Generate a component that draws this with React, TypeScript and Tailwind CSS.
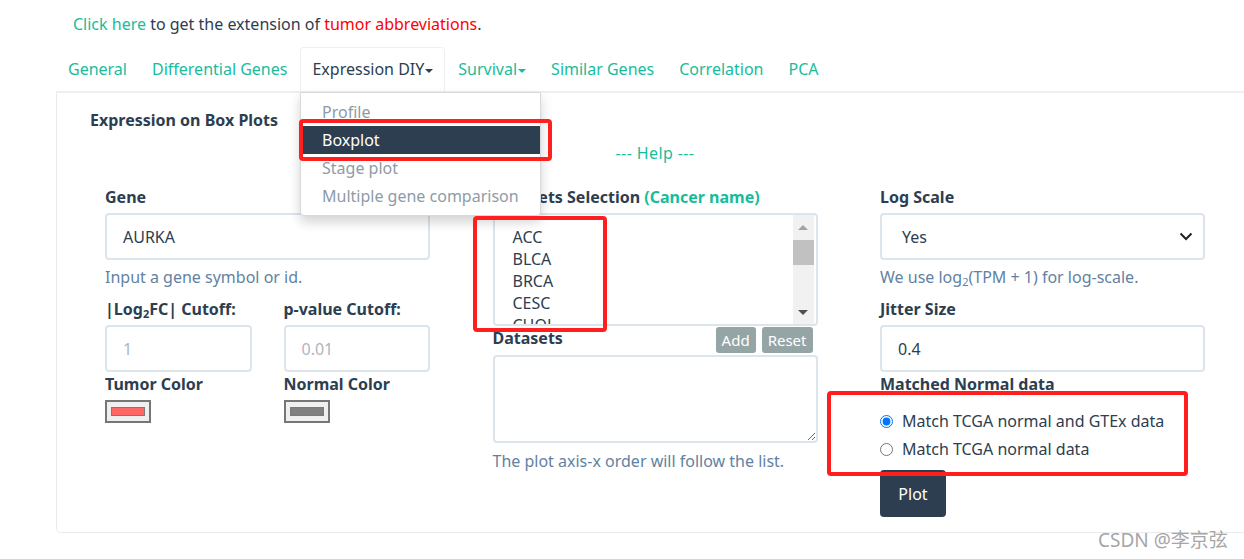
import React from "react";

const labelCls = "block text-[16px] font-bold leading-[24px] text-[#2c3e50]";
const helpCls = "leading-[24px] text-[#6282a2]";
const inputCls =
  "flex h-[47px] items-center rounded-[4px] border-2 border-[#dce4ec] bg-white pl-[16px]";

function Caret({ color }: { color: "dark" | "teal" }) {
  return (
    <span
      className={
        color === "dark"
          ? "ml-[1px] inline-block h-0 w-0 border-x-[4px] border-t-[4px] border-x-transparent border-t-[#2c3e50] align-middle"
          : "ml-[1px] inline-block h-0 w-0 border-x-[4px] border-t-[4px] border-x-transparent border-t-[#18bc9c] align-middle"
      }
    />
  );
}

function Swatch({ red }: { red: boolean }) {
  return (
    <div className="mt-[4px] flex h-[23px] w-[46px] items-center justify-center border-2 border-[#767676] bg-[#efefef]">
      <div
        className={
          red
            ? "h-[9px] w-[34px] border border-[#7a7a7a] bg-[#ff6666]"
            : "h-[9px] w-[34px] border border-[#7a7a7a] bg-[#808080]"
        }
      />
    </div>
  );
}

export default function App() {
  return (
    <div className="relative h-[559px] w-[1244px] overflow-hidden bg-white font-['Noto_Sans',sans-serif] text-[16px] text-[#2c3e50]">
      {/* top line */}
      <div className="h-[47px] pl-[73px] pt-[12px] leading-[24px]">
        <span className="text-[#18bc9c]">Click here</span> to get the extension of{" "}
        <span className="text-[#ff0000]">tumor abbreviations</span>.
      </div>

      {/* tabs */}
      <nav className="ml-[56px] flex h-[46px] border-b-2 border-[#ecf0f1]">
        <div className="mr-[1px] h-[44px] px-3 leading-[44px] text-[#18bc9c]">General</div>
        <div className="mr-[1px] h-[44px] px-3 leading-[44px] text-[#18bc9c]">Differential Genes</div>
        <div className="mr-[1px] h-[44px] rounded-t-[4px] border-x border-t border-[#ecf0f1] px-[11px] leading-[43px] text-[#2c3e50]">
          Expression DIY
          <Caret color="dark" />
        </div>
        <div className="mr-[1px] h-[44px] px-3 leading-[44px] text-[#18bc9c]">
          Survival
          <Caret color="teal" />
        </div>
        <div className="mr-[1px] h-[44px] px-3 leading-[44px] text-[#18bc9c]">Similar Genes</div>
        <div className="mr-[1px] h-[44px] px-3 leading-[44px] text-[#18bc9c]">Correlation</div>
        <div className="mr-[1px] h-[44px] px-3 leading-[44px] text-[#18bc9c]">PCA</div>
      </nav>

      {/* panel */}
      <div className="ml-[56px] h-[440px] w-[1250px] rounded-bl-[5px] border-x border-b border-[#e6ebeb] pl-[33px] pt-[15px]">
        <div className="text-[16px] font-bold leading-[24px]">Expression on Box Plots</div>

        <div className="ml-[15px] w-[1100px]">
          <div className="mt-[9px] text-center leading-[24px] tracking-[0.4px] text-[#18bc9c]">--- Help ---</div>

          <div className="mt-[20px] grid grid-cols-3 gap-x-[62.5px]">
            {/* column 1 */}
            <div className="flex flex-col">
              <span className={labelCls}>Gene</span>
              <div className={"mt-[4px] " + inputCls}>AURKA</div>
              <div className={"mt-[5px] " + helpCls}>Input a gene symbol or id.</div>
              <div className="mt-[8px] grid grid-cols-2 gap-x-[32px]">
                <div className="flex flex-col">
                  <span className={labelCls}>
                    |Log<sub className="text-[11px]">2</sub>FC| Cutoff:
                  </span>
                  <div className={"mt-[4px] text-[#acb6c0] " + inputCls}>1</div>
                  <span className={labelCls}>Tumor Color</span>
                  <Swatch red={true} />
                </div>
                <div className="flex flex-col">
                  <span className={labelCls}>p-value Cutoff:</span>
                  <div className={"mt-[4px] text-[#acb6c0] " + inputCls}>0.01</div>
                  <span className={labelCls}>Normal Color</span>
                  <Swatch red={false} />
                </div>
              </div>
            </div>

            {/* column 2 */}
            <div className="flex flex-col">
              <span className={labelCls}>
                Datasets Selection <span className="text-[#18bc9c]">(Cancer name)</span>
              </span>
              <div className="mt-[4px] flex h-[113px] overflow-hidden rounded-[4px] border-2 border-[#dce4ec] bg-white">
                <div className="flex-1 pl-[18px] pt-[11px] leading-[22px]">
                  <div>ACC</div>
                  <div>BLCA</div>
                  <div>BRCA</div>
                  <div>CESC</div>
                  <div>CHOL</div>
                </div>
                <div className="mr-[2px] flex w-[21px] flex-col items-center bg-[#f1f1f1]">
                  <div className="flex h-[25px] items-center justify-center">
                    <div className="h-0 w-0 border-x-[5px] border-b-[5px] border-x-transparent border-b-[#a3a3a3]" />
                  </div>
                  <div className="h-[25px] w-[21px] bg-[#c1c1c1]" />
                  <div className="flex-1" />
                  <div className="flex h-[24px] items-center justify-center">
                    <div className="h-0 w-0 border-x-[5px] border-t-[5px] border-x-transparent border-t-[#505050]" />
                  </div>
                </div>
              </div>
              <div className="flex h-[29px] items-start justify-between">
                <span className={labelCls}>Datasets</span>
                <div className="mr-[5px] mt-[1px] flex gap-[6px]">
                  <button className="h-[26px] rounded-[3px] bg-[#95a5a6] px-[6px] text-[15px] leading-[26px] text-white">
                    Add
                  </button>
                  <button className="h-[26px] rounded-[3px] bg-[#95a5a6] px-[6px] text-[15px] leading-[26px] text-white">
                    Reset
                  </button>
                </div>
              </div>
              <textarea
                readOnly
                className="block h-[88px] w-full rounded-[4px] border-2 border-[#dce4ec] bg-white outline-none"
              />
              <div className={"mt-[6px] " + helpCls}>The plot axis-x order will follow the list.</div>
            </div>

            {/* column 3 */}
            <div className="flex flex-col">
              <span className={labelCls}>Log Scale</span>
              <div className={"mt-[4px] justify-between pl-[20px] pr-[10px] " + inputCls}>
                <span>Yes</span>
                <svg width="14" height="9" viewBox="0 0 14 9" fill="none">
                  <path d="M1.5 1.5L7 7l5.5-5.5" stroke="#222" strokeWidth="2" />
                </svg>
              </div>
              <div className={"mt-[5px] " + helpCls}>
                We use log<sub className="text-[11px]">2</sub>(TPM + 1) for log-scale.
              </div>
              <span className={"mt-[8px] " + labelCls}>Jitter Size</span>
              <div className={"mt-[4px] " + inputCls}>0.4</div>
              <span className={labelCls}>Matched Normal data</span>
              <label className="mt-[13px] flex h-[24px] items-center gap-[9px] leading-[24px]">
                <input type="radio" name="m" defaultChecked className="m-0 h-[13px] w-[13px]" />
                Match TCGA normal and GTEx data
              </label>
              <label className="mt-[4px] flex h-[24px] items-center gap-[9px] leading-[24px]">
                <input type="radio" name="m" className="m-0 h-[13px] w-[13px]" />
                Match TCGA normal data
              </label>
              <button className="mt-[9px] h-[47px] w-[66px] rounded-[4px] bg-[#2c3e50] text-white">Plot</button>
            </div>
          </div>
        </div>
      </div>

      {/* dropdown menu */}
      <div className="absolute left-[300px] top-[92px] w-[241px] rounded-b-[4px] border border-[#d9d9d9] bg-white pb-[5px] pt-[5px] shadow-[0_6px_12px_rgba(0,0,0,0.175)]">
        <div className="px-[21px] leading-[28px] text-[#8e9ba5]">Profile</div>
        <div className="bg-[#2c3e50] px-[21px] leading-[28px] text-white">Boxplot</div>
        <div className="px-[21px] leading-[28px] text-[#8e9ba5]">Stage plot</div>
        <div className="px-[21px] leading-[28px] text-[#8e9ba5]">Multiple gene comparison</div>
      </div>

      {/* red annotation boxes */}
      <div className="absolute left-[299px] top-[119px] h-[42px] w-[253px] rounded-[4px] border-[4px] border-[#ff1f1f]" />
      <div className="absolute left-[473px] top-[216px] h-[116px] w-[134px] rounded-[4px] border-[4px] border-[#ff1f1f]" />
      <div className="absolute left-[827px] top-[391px] h-[85px] w-[361px] rounded-[4px] border-[4px] border-[#ff1f1f]" />

      {/* watermark */}
      <div className="absolute left-[1098px] top-[527px] font-['Noto_Sans','Noto_Sans_CJK_SC',sans-serif] text-[19px] leading-[26px] text-[#a6a6a6]">
        CSDN @李京弦
      </div>
    </div>
  );
}
